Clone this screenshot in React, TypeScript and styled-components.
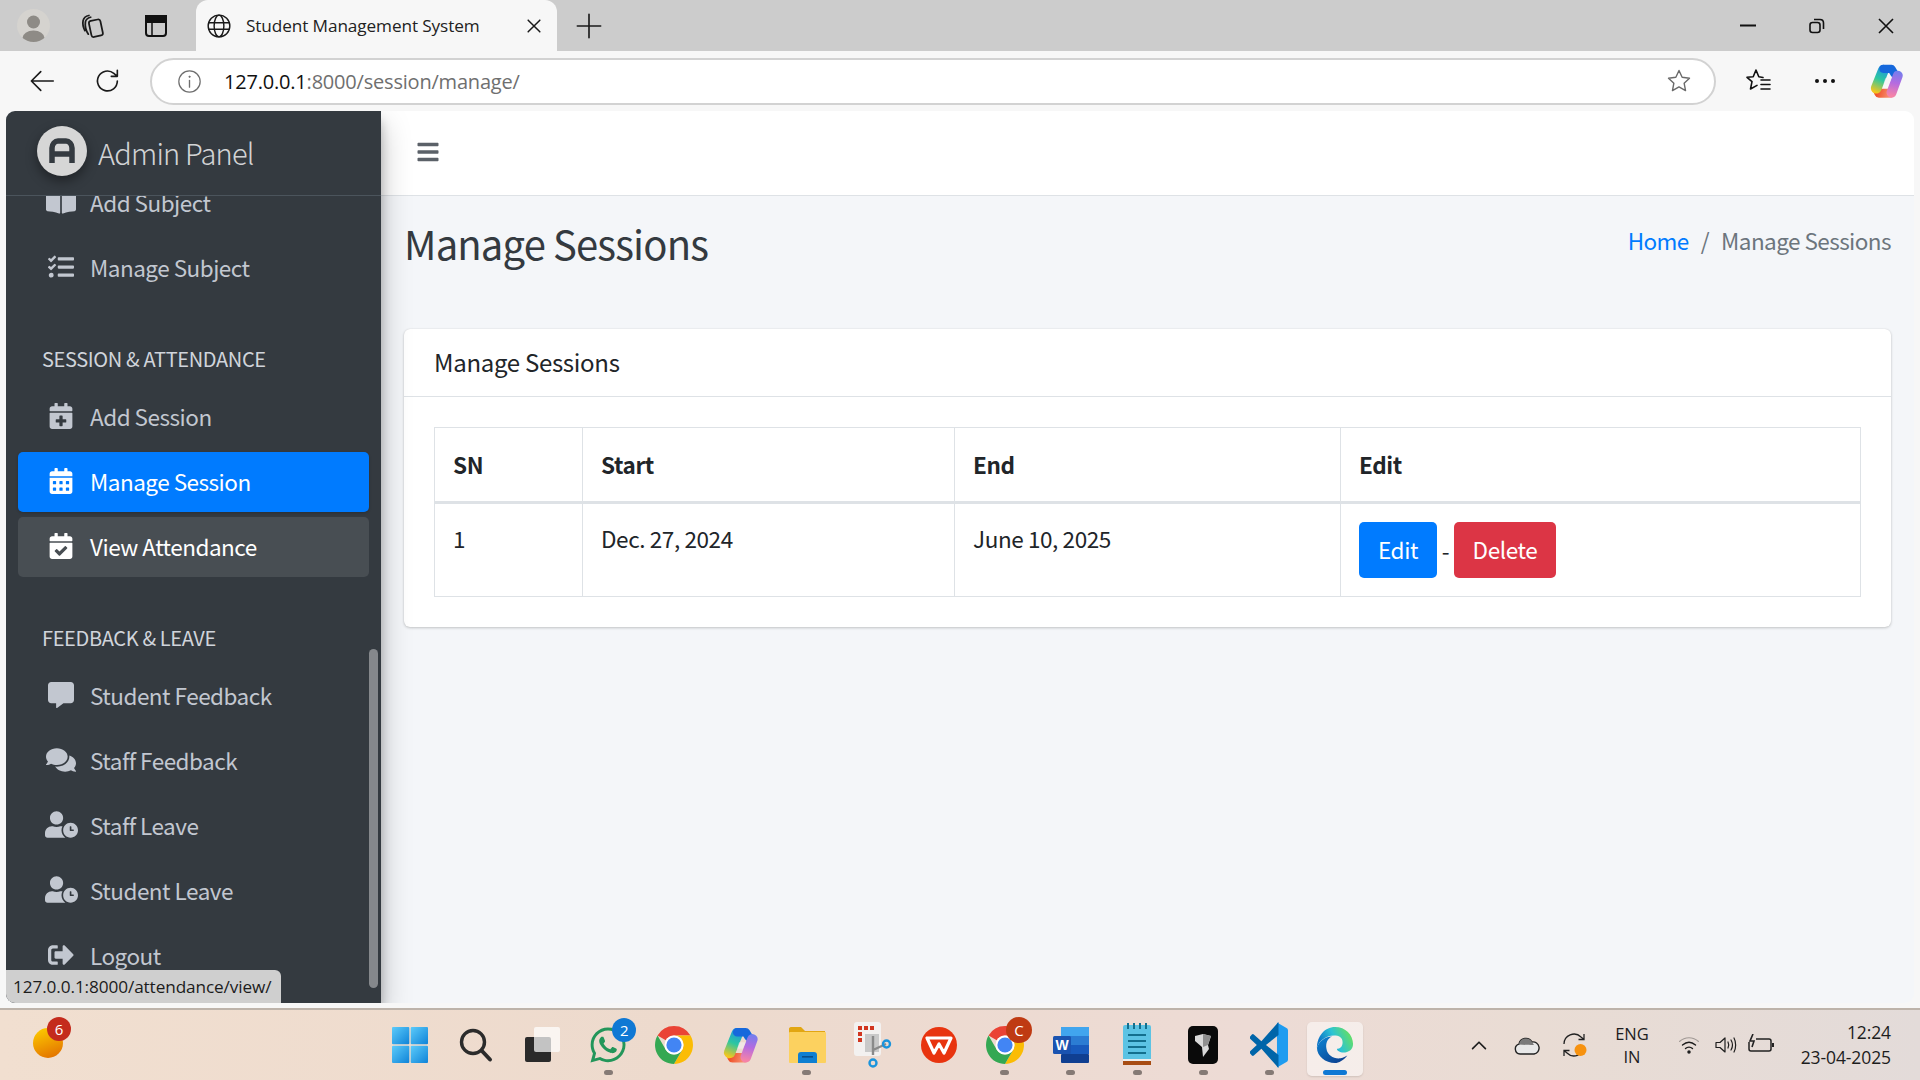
import styled, { createGlobalStyle } from 'styled-components'
import {
  FaBars,
  FaBookOpen,
  FaTasks,
  FaCalendarPlus,
  FaCalendarAlt,
  FaCalendarCheck,
  FaCommentAlt,
  FaComments,
  FaUserClock,
  FaSignOutAlt,
  FaWhatsapp,
} from 'react-icons/fa'
import { ReactNode } from 'react'

const SOURCE = `"Noto Sans CJK SC", "Noto Sans", sans-serif`
const SEGOE = `"Open Sans", "Noto Sans", sans-serif`

const GlobalStyle = createGlobalStyle`
  html, body { margin: 0; padding: 0; }
  body { font-family: ${SOURCE}; background: #f7f7f7; }
  * { box-sizing: border-box; }
`

/* ---------- browser chrome icons ---------- */

const Line = ({ size = 24, children }: { size?: number; children: ReactNode }) => (
  <svg width={size} height={size} viewBox="0 0 24 24" fill="none" stroke="currentColor" strokeWidth="1.5" strokeLinecap="round" strokeLinejoin="round">
    {children}
  </svg>
)

const CopilotLogo = ({ id, size }: { id: string; size: number }) => (
  <svg width={size} height={size} viewBox="0 0 40 40" fill="none" strokeLinecap="round" strokeLinejoin="round">
    <defs>
      <linearGradient id={`${id}a`} gradientUnits="userSpaceOnUse" x1="18" y1="4" x2="6" y2="32">
        <stop offset="0" stopColor="#1d8fe6" />
        <stop offset="0.5" stopColor="#2cc7a0" />
        <stop offset="1" stopColor="#f5c61d" />
      </linearGradient>
      <linearGradient id={`${id}b`} gradientUnits="userSpaceOnUse" x1="30" y1="8" x2="24" y2="36">
        <stop offset="0" stopColor="#6f7fee" />
        <stop offset="0.5" stopColor="#b56be0" />
        <stop offset="1" stopColor="#f583a8" />
      </linearGradient>
      <linearGradient id={`${id}c`} gradientUnits="userSpaceOnUse" x1="10" y1="30" x2="28" y2="36">
        <stop offset="0" stopColor="#f0532a" />
        <stop offset="1" stopColor="#f9a58c" />
      </linearGradient>
    </defs>
    <path d="M9 29l2 4.500h13" stroke={`url(#${id}c)`} strokeWidth="10" />
    <path d="M16 8L8 28" stroke={`url(#${id}a)`} strokeWidth="12" />
    <path d="M16 6.500h9l3 5" stroke="#1668dc" strokeWidth="9" />
    <path d="M32 14l-7 19" stroke={`url(#${id}b)`} strokeWidth="11" />
    <path d="M18 17h7l-3 7h-6z" fill="#f4f1f4" fillOpacity="0.55" />
  </svg>
)

const ChromeLogo = ({ size }: { size: number }) => (
  <svg width={size} height={size} viewBox="0 0 40 40">
    <path d="M20 0a20 20 0 0 1 17.320 10H20a10 10 0 0 0-8.660 5L2.680 10A20 20 0 0 1 20 0z" fill="#ea4335" />
    <path d="M37.320 10A20 20 0 0 1 20 40l8.660-15A10 10 0 0 0 20 10z" fill="#fbbc04" />
    <path d="M2.680 10A20 20 0 0 0 20 40l8.660-15a10 10 0 0 1-17.320 0z" fill="#34a853" />
    <circle cx="20" cy="20" r="10" fill="#fff" />
    <circle cx="20" cy="20" r="8" fill="#4285f4" />
  </svg>
)

/* ---------- taskbar logos ---------- */

const WindowsLogo = () => (
  <svg width="36" height="36" viewBox="0 0 36 36">
    <defs>
      <linearGradient id="winA" x1="0" y1="0" x2="1" y2="1">
        <stop offset="0" stopColor="#5ccbfa" />
        <stop offset="1" stopColor="#0f83d8" />
      </linearGradient>
    </defs>
    <rect x="0" y="0" width="17.300" height="17.300" rx="1" fill="url(#winA)" />
    <rect x="18.700" y="0" width="17.300" height="17.300" rx="1" fill="url(#winA)" />
    <rect x="0" y="18.700" width="17.300" height="17.300" rx="1" fill="url(#winA)" />
    <rect x="18.700" y="18.700" width="17.300" height="17.300" rx="1" fill="url(#winA)" />
  </svg>
)

const SearchLogo = () => (
  <svg width="36" height="36" viewBox="0 0 36 36" fill="none" stroke="#2b2b2b" strokeLinecap="round">
    <circle cx="15" cy="15" r="11.500" strokeWidth="3.400" />
    <path d="M24 24l8 8.500" strokeWidth="4" />
  </svg>
)

const TaskViewLogo = () => (
  <svg width="36" height="36" viewBox="0 0 36 36">
    <rect x="1" y="10" width="26" height="25" rx="2" fill="#2a2a2a" />
    <rect x="10" y="0" width="26" height="25" rx="2" fill="#fff" fillOpacity="0.72" />
  </svg>
)

const ExplorerLogo = () => (
  <svg width="38" height="36" viewBox="0 0 38 36">
    <path d="M1 2c0-1 .6-2 2-2h10l4 4h20v10H1z" fill="#e2a612" />
    <rect x="1" y="5" width="37" height="31" rx="1" fill="#fcd15f" />
    <path d="M10 28c0-2 1-3 3-3h13c2 0 3 1 3 3v8H10z" fill="#0f7fd1" />
    <rect x="14" y="29" width="11" height="1.600" fill="#0a4f8a" />
  </svg>
)

const SnipLogo = () => (
  <svg width="38" height="46" viewBox="0 0 38 46">
    <rect x="0" y="0" width="27" height="34" rx="3" fill="#f3f1f0" />
    <g fill="#d1351f">
      <rect x="4" y="4" width="4" height="4" />
      <rect x="10" y="4" width="4" height="4" />
      <rect x="16" y="4" width="4" height="4" />
      <rect x="4" y="10" width="4" height="4" />
      <rect x="4" y="16" width="4" height="4" />
    </g>
    <rect x="11" y="12" width="14" height="18" fill="#c9c9c9" />
    <path d="M19 14v19M19 28l13-6" stroke="#8a8a8a" strokeWidth="2.400" fill="none" />
    <circle cx="32.500" cy="22" r="3.500" fill="none" stroke="#1b94dc" strokeWidth="2.400" />
    <circle cx="19" cy="41" r="3.500" fill="none" stroke="#1b94dc" strokeWidth="2.400" />
  </svg>
)

const WpsLogo = () => (
  <svg width="36" height="36" viewBox="0 0 36 36">
    <circle cx="18" cy="18" r="18" fill="#e8340f" />
    <path d="M6 11h24l-7 15-5-9-5 9z" fill="none" stroke="#fff" strokeWidth="3.200" strokeLinejoin="round" />
  </svg>
)

const WordLogo = () => (
  <svg width="36" height="36" viewBox="0 0 36 36">
    <rect x="8" y="0" width="28" height="9" fill="#41a5ee" />
    <rect x="8" y="9" width="28" height="9" fill="#2b7cd3" />
    <rect x="8" y="18" width="28" height="9" fill="#185abd" />
    <rect x="8" y="27" width="28" height="9" rx="1" fill="#103f91" />
    <rect x="0" y="9" width="18" height="18" rx="1.500" fill="#1a53b0" />
    <text x="9" y="23" textAnchor="middle" fontFamily="Liberation Sans, sans-serif" fontWeight="700" fontSize="14" fill="#fff">W</text>
  </svg>
)

const NotepadLogo = () => (
  <svg width="30" height="44" viewBox="0 0 30 44">
    <rect x="1" y="2" width="28" height="36" rx="2" fill="#5cc3e4" />
    <rect x="1" y="37" width="28" height="5" fill="#a84d14" />
    <rect x="1" y="36" width="28" height="2" fill="#eee" />
    <g fill="#136f8e">
      <rect x="5" y="0" width="2" height="6" />
      <rect x="11" y="0" width="2" height="6" />
      <rect x="17" y="0" width="2" height="6" />
      <rect x="23" y="0" width="2" height="6" />
      <rect x="6" y="11" width="18" height="2" />
      <rect x="6" y="17" width="18" height="2" />
      <rect x="6" y="23" width="18" height="2" />
      <rect x="6" y="29" width="18" height="2" />
    </g>
  </svg>
)

const BlackAppLogo = () => (
  <svg width="30" height="38" viewBox="0 0 30 38">
    <rect x="0" y="0" width="30" height="38" rx="5" fill="#0a0a0a" />
    <path d="M7 10l8-2 8 2-3 9 1 4-6 8-1-10-7-6z" fill="#d9d9d9" />
    <path d="M15 8l8 2-3 9-5 2z" fill="#8f8f8f" />
  </svg>
)

const VsCodeLogo = () => (
  <svg width="38" height="46" viewBox="0 0 100 100" preserveAspectRatio="none">
    <path d="M71 99l25-12a6 6 0 0 0 4-5V18a6 6 0 0 0-4-5L71 1z" fill="#1f9cf0" />
    <path d="M75 0L30 42 10 27a4 4 0 0 0-5 0l-4 4a4 4 0 0 0 0 6l17 13L1 63a4 4 0 0 0 0 6l4 4a4 4 0 0 0 5 0l20-15 45 42V72L42 50l33-22z" fill="#0065a9" />
  </svg>
)

const EdgeLogo = () => (
  <svg width="38" height="40" viewBox="0 0 40 40">
    <defs>
      <linearGradient id="edgeTop" x1="0.1" y1="0.6" x2="0.9" y2="0.3">
        <stop offset="0" stopColor="#0c76c8" />
        <stop offset="0.5" stopColor="#2cc3d5" />
        <stop offset="1" stopColor="#5fdc6e" />
      </linearGradient>
      <linearGradient id="edgeBottom" x1="0" y1="0" x2="0.8" y2="1">
        <stop offset="0" stopColor="#0d87d6" />
        <stop offset="1" stopColor="#0c3f8f" />
      </linearGradient>
    </defs>
    <path d="M20 1c11 0 19 8 19 18 0 6-5 9-10 9-4 0-7-2-7-4 3 0 6-2 6-7 0-5-4-7-9-7C10 10 3 16 1 23 1 11 9 1 20 1z" fill="url(#edgeTop)" />
    <path d="M1 23c2-7 9-12 16-12-5 2-7 7-6 13 1 7 8 11 15 10 3-.5 5-2 7-3-4 5-9 8-13 8C10 39 1 32 1 23z" fill="url(#edgeBottom)" />
  </svg>
)

/* ---------- browser chrome ---------- */

const Page = styled.div`
  width: 1920px;
  height: 1080px;
  display: flex;
  flex-direction: column;
  overflow: hidden;
  background: #f7f7f7;
`

const TabStrip = styled.div`
  height: 51px;
  flex: none;
  display: flex;
  align-items: center;
  background: #cccccc;
  padding-left: 3px;
  color: #1a1a1a;
`

const Slot = styled.div<{ $w: number; $color?: string }>`
  width: ${(p) => p.$w}px;
  height: 100%;
  flex: none;
  display: flex;
  align-items: center;
  justify-content: center;
  color: ${(p) => p.$color || '#1a1a1a'};
`

const Avatar = styled.div`
  width: 33px;
  height: 33px;
  border-radius: 50%;
  background: #d5d3cf;
  overflow: hidden;
  display: flex;
  align-items: center;
  justify-content: center;
`

const Tab = styled.div`
  margin-left: 7px;
  width: 361px;
  height: 51px;
  align-self: flex-end;
  background: #f7f7f7;
  border-radius: 12px 12px 0 0;
  display: flex;
  align-items: center;
  padding-left: 10px;
  flex: none;
`

const TabTitle = styled.span`
  font-family: ${SEGOE};
  font-size: 17.200px;
  color: #222;
  margin-left: 14px;
  flex: 1;
  letter-spacing: -0.1px;
`

const WindowButtons = styled.div`
  margin-left: auto;
  display: flex;
  height: 100%;
`

const Toolbar = styled.div`
  height: 60px;
  flex: none;
  display: flex;
  align-items: center;
  padding: 0 0 0 9px;
  background: #f7f7f7;
  color: #1a1a1a;
`

const AddressBar = styled.div`
  width: 1566px;
  height: 47px;
  margin-left: 9px;
  flex: none;
  background: #fff;
  border: 2px solid #d2d2d2;
  border-radius: 24px;
  display: flex;
  align-items: center;
  padding: 0 20px 0 23px;
`

const Url = styled.div`
  margin-left: 21px;
  flex: 1;
  font-family: ${SEGOE};
  font-size: 20px;
  letter-spacing: -0.2px;
  color: #6f6f6f;
  b {
    font-weight: 400;
    color: #111;
  }
`

/* ---------- page ---------- */

const BrowserBody = styled.div`
  flex: 1;
  min-height: 0;
  padding: 0 6px 5px 6px;
  display: flex;
`

const Viewport = styled.div`
  position: relative;
  flex: 1;
  display: flex;
  border-radius: 9px;
  overflow: hidden;
  background: #f4f6f9;
`

const Sidebar = styled.aside`
  width: 375px;
  flex: none;
  background: #343a40;
  display: flex;
  flex-direction: column;
  box-shadow: 0 14px 28px rgba(0, 0, 0, 0.25), 0 10px 10px rgba(0, 0, 0, 0.22);
  z-index: 2;
`

const Brand = styled.div`
  height: 85px;
  flex: none;
  display: flex;
  align-items: center;
  padding: 0 0 5px 31px;
  border-bottom: 1px solid #4b545c;
`

const BrandMark = styled.div`
  width: 50px;
  height: 50px;
  border-radius: 50%;
  background: #d6d6d6;
  display: flex;
  align-items: center;
  justify-content: center;
  box-shadow: 0 5px 12px rgba(0, 0, 0, 0.4);
`

const BrandText = styled.span`
  margin-left: 11px;
  margin-top: 3px;
  font-size: 29px;
  letter-spacing: -0.8px;
  font-weight: 300;
  color: rgba(255, 255, 255, 0.8);
`

const NavClip = styled.nav`
  flex: 1;
  min-height: 0;
  overflow: hidden;
`

const NavList = styled.div`
  margin-top: -23px;
  padding: 0 12px;
`

const NavHeading = styled.div`
  padding: 41px 0 13px 24px;
  font-size: 20px;
  letter-spacing: -0.35px;
  line-height: 30px;
  color: #d0d4db;
`

const NavItem = styled.a<{ $state?: 'active' | 'hover' }>`
  height: 60px;
  margin-bottom: 5px;
  display: flex;
  align-items: center;
  padding: 0 0 3px 24px;
  border-radius: 5px;
  font-size: 22.500px;
  letter-spacing: -0.5px;
  color: ${(p) => (p.$state ? '#fff' : '#c2c7d0')};
  background: ${(p) =>
    p.$state === 'active' ? '#007bff' : p.$state === 'hover' ? 'rgba(255,255,255,0.1)' : 'transparent'};
  ${(p) => p.$state === 'active' && 'box-shadow: 0 1px 3px rgba(0,0,0,.2);'}
`

const NavIcon = styled.span`
  width: 38px;
  flex: none;
  margin-right: 10px;
  display: flex;
  justify-content: center;
`

const Scrollbar = styled.div`
  position: absolute;
  left: 363px;
  top: 538px;
  width: 9px;
  height: 339px;
  border-radius: 5px;
  background: #85888c;
  z-index: 3;
`

const StatusBubble = styled.div`
  position: absolute;
  left: 0;
  bottom: 0;
  width: 275px;
  height: 33px;
  display: flex;
  align-items: center;
  padding-left: 7px;
  background: #cfcfcf;
  border-radius: 0 6px 0 0;
  font-family: ${SEGOE};
  font-size: 17.200px;
  letter-spacing: -0.1px;
  color: #1c1c1c;
  z-index: 4;
`

const Main = styled.main`
  flex: 1;
  min-width: 0;
  display: flex;
  flex-direction: column;
`

const TopBar = styled.header`
  height: 85px;
  flex: none;
  display: flex;
  align-items: center;
  padding: 0 0 2px 35px;
  background: #fff;
  border-bottom: 1px solid #dee2e6;
  color: #5b6168;
  font-size: 24px;
`

const Content = styled.section`
  padding: 24px 23px 0 23px;
`

const PageHead = styled.div`
  height: 50px;
  margin-bottom: 59px;
  display: flex;
  align-items: center;
  justify-content: space-between;
`

const PageTitle = styled.h1`
  margin: -5px 0 0 0;
  font-size: 40px;
  letter-spacing: -0.85px;
  font-weight: 400;
  color: #343a40;
`

const Crumbs = styled.div`
  display: flex;
  align-items: center;
  font-size: 22.500px;
  letter-spacing: -0.55px;
  color: #6c757d;
  margin-top: -11px;
  a {
    color: #007bff;
  }
  i {
    font-style: normal;
    margin: 0 12px;
  }
`

const Card = styled.div`
  background: #fff;
  border-radius: 6px;
  box-shadow: 0 0 1px rgba(0, 0, 0, 0.125), 0 1px 3px rgba(0, 0, 0, 0.2);
`

const CardHeader = styled.div`
  height: 68px;
  display: flex;
  align-items: center;
  padding: 0 0 2px 30px;
  border-bottom: 1px solid #dee2e6;
  font-size: 24px;
  letter-spacing: -0.3px;
  color: #212529;
`

const CardBody = styled.div`
  padding: 30px;
`

const Table = styled.table`
  width: 100%;
  table-layout: fixed;
  border-collapse: collapse;
  font-size: 22.500px;
  letter-spacing: -0.4px;
  line-height: 37px;
  color: #212529;
`

const Th = styled.th<{ $w?: number }>`
  ${(p) => p.$w && `width: ${p.$w}px;`}
  padding: 18px;
  text-align: left;
  font-weight: 700;
  border: 1px solid #dee2e6;
  border-bottom: 3px solid #dee2e6;
`

const Td = styled.td`
  padding: 16px 18px 20px;
  vertical-align: top;
  border: 1px solid #dee2e6;
`

const Actions = styled.div`
  display: flex;
  align-items: center;
  margin: 2px 0 -2px;
`

const Dash = styled.span`
  width: 17px;
  text-align: center;
`

const Button = styled.a<{ $color: string; $w: number }>`
  width: ${(p) => p.$w}px;
  height: 56px;
  display: flex;
  align-items: center;
  justify-content: center;
  border-radius: 5px;
  background: ${(p) => p.$color};
  color: #fff;
  font-size: 22.500px;
  letter-spacing: -0.4px;
  padding-bottom: 2px;
`

/* ---------- taskbar ---------- */

const Taskbar = styled.footer`
  height: 72px;
  flex: none;
  display: flex;
  align-items: center;
  border-top: 2px solid #bdb3aa;
  background: linear-gradient(90deg, #f1dfd0 0%, #eddacd 35%, #eddbd5 65%, #e9dcd4 80%, #e3dbd9 100%);
`

const Widgets = styled.div`
  width: 377px;
  flex: none;
  padding-left: 33px;
  height: 100%;
  display: flex;
  align-items: center;
`

const Weather = styled.div`
  position: relative;
  width: 30px;
  height: 30px;
  margin-top: -4px;
  border-radius: 50%;
  background: linear-gradient(160deg, #ffd000, #e06a00);
`

const Pill = styled.span<{ $bg: string; $top: number; $size?: number }>`
  position: absolute;
  top: ${(p) => p.$top}px;
  right: -8px;
  width: ${(p) => p.$size || 24}px;
  height: ${(p) => p.$size || 24}px;
  border-radius: 50%;
  display: flex;
  align-items: center;
  justify-content: center;
  background: ${(p) => p.$bg};
  color: #fff;
  font-family: ${SEGOE};
  font-size: 15px;
`

const TaskIcons = styled.div`
  display: flex;
  height: 100%;
`

const TaskIcon = styled.div<{ $open?: boolean; $active?: boolean }>`
  position: relative;
  width: 66.100px;
  height: 100%;
  display: flex;
  align-items: center;
  justify-content: center;
  &::before {
    content: '';
    display: ${(p) => (p.$active ? 'block' : 'none')};
    position: absolute;
    left: 5px;
    right: 5px;
    top: 12px;
    bottom: 4px;
    border-radius: 5px;
    background: rgba(255, 255, 255, 0.5);
    box-shadow: 0 1px 2px rgba(0, 0, 0, 0.12);
  }
  &::after {
    content: '';
    display: ${(p) => (p.$open || p.$active ? 'block' : 'none')};
    position: absolute;
    left: 50%;
    bottom: 5px;
    width: ${(p) => (p.$active ? 24 : 9)}px;
    height: 5px;
    margin-left: ${(p) => (p.$active ? -12 : -4.5)}px;
    border-radius: 3px;
    background: ${(p) => (p.$active ? '#0f78d4' : '#857a75')};
  }
  > svg {
    position: relative;
    z-index: 1;
  }
`

const IconBadgeWrap = styled.div`
  position: relative;
  display: flex;
`

const Tray = styled.div`
  margin-left: auto;
  height: 100%;
  display: flex;
  align-items: center;
  padding-right: 29px;
  color: #1d1d1d;
  font-family: ${SEGOE};
`

const TrayIcon = styled.div<{ $w: number }>`
  width: ${(p) => p.$w}px;
  display: flex;
  justify-content: center;
`

const Lang = styled.div`
  width: 66px;
  text-align: center;
  font-size: 16.500px;
  line-height: 23px;
`

const Clock = styled.div`
  width: 106px;
  text-align: right;
  font-size: 17.500px;
  line-height: 25px;
  letter-spacing: -0.1px;
`

const AdminMark = () => (
  <svg width="26" height="26" viewBox="0 0 26 26" fill="none" stroke="#343a40" strokeWidth="5.500">
    <path d="M3 25V10c0-4 3-7 6-7h8c3 0 6 3 6 7v15M3 16h20" />
  </svg>
)

type NavEntry = { icon: ReactNode; label: string; state?: 'active' | 'hover' }

const subjectNav: NavEntry[] = [
  { icon: <FaBookOpen size={30} />, label: 'Add Subject' },
  { icon: <FaTasks size={26} />, label: 'Manage Subject' },
]

const sessionNav: NavEntry[] = [
  { icon: <FaCalendarPlus size={26} />, label: 'Add Session' },
  { icon: <FaCalendarAlt size={26} />, label: 'Manage Session', state: 'active' },
  { icon: <FaCalendarCheck size={26} />, label: 'View Attendance', state: 'hover' },
]

const feedbackNav: NavEntry[] = [
  { icon: <FaCommentAlt size={26} />, label: 'Student Feedback' },
  { icon: <FaComments size={30} />, label: 'Staff Feedback' },
  { icon: <FaUserClock size={33} />, label: 'Staff Leave' },
  { icon: <FaUserClock size={33} />, label: 'Student Leave' },
  { icon: <FaSignOutAlt size={26} />, label: 'Logout' },
]

const renderNav = (items: NavEntry[]) =>
  items.map((item) => (
    <NavItem key={item.label} $state={item.state}>
      <NavIcon>{item.icon}</NavIcon>
      {item.label}
    </NavItem>
  ))

const App = () => {
  return (
    <Page>
      <GlobalStyle />
      <TabStrip>
        <Slot $w={60}>
          <Avatar>
            <svg width="33" height="33" viewBox="0 0 33 33">
              <circle cx="16.500" cy="13" r="6.500" fill="#8e8b86" />
              <ellipse cx="16.500" cy="29" rx="11" ry="7.500" fill="#8e8b86" />
            </svg>
          </Avatar>
        </Slot>
        <Slot $w={60}>
          <Line size={28}>
            <rect x="9.500" y="7" width="10" height="14" rx="2" transform="rotate(-12 14 14)" />
            <path d="M8 19C6 16 5 12 5.500 8.500 6 6 8 5 10 4.500M5 16C3.500 13 3 10 3.500 7.500 4 5 6 3.500 8.500 3" />
          </Line>
        </Slot>
        <Slot $w={66}>
          <svg width="24" height="24" viewBox="0 0 24 24" fill="none" stroke="#111" strokeWidth="2">
            <rect x="2" y="2" width="20" height="20" rx="3" />
            <rect x="2" y="2" width="20" height="6" fill="#111" />
            <path d="M8 8v14" strokeWidth="1.500" />
          </svg>
        </Slot>
        <Tab>
          <Line size={26}>
            <circle cx="12" cy="12" r="10" strokeWidth="1.300" />
            <ellipse cx="12" cy="12" rx="4.500" ry="10" strokeWidth="1.300" />
            <path d="M2.500 9h19M2.500 15h19" strokeWidth="1.300" />
          </Line>
          <TabTitle>Student Management System</TabTitle>
          <Slot $w={46}>
            <Line size={20}>
              <path d="M5 5l14 14M19 5L5 19" strokeWidth="1.800" />
            </Line>
          </Slot>
        </Tab>
        <Slot $w={64}>
          <Line size={28}>
            <path d="M12 2v20M2 12h20" strokeWidth="1.400" />
          </Line>
        </Slot>
        <WindowButtons>
          <Slot $w={69}>
            <svg width="16" height="3" viewBox="0 0 16 3">
              <rect width="16" height="2" y="0.500" fill="#111" />
            </svg>
          </Slot>
          <Slot $w={69}>
            <svg width="16" height="16" viewBox="0 0 16 16" fill="none" stroke="#111" strokeWidth="1.600">
              <rect x="1" y="4.500" width="10" height="10" rx="2.500" />
              <path d="M5 1.500h6c2 0 3.500 1.500 3.500 3.500v6" />
            </svg>
          </Slot>
          <Slot $w={69}>
            <svg width="16" height="16" viewBox="0 0 16 16" fill="none" stroke="#111" strokeWidth="1.600">
              <path d="M1 1l14 14M15 1L1 15" />
            </svg>
          </Slot>
        </WindowButtons>
      </TabStrip>

      <Toolbar>
        <Slot $w={66}>
          <Line size={30}>
            <path d="M21 12H3.500M11 4.500L3.500 12l7.500 7.500" strokeWidth="1.300" />
          </Line>
        </Slot>
        <Slot $w={66}>
          <Line size={28}>
            <path d="M20 12a8.500 8.500 0 1 1-3-6.500L20 8M20 2.800V8h-5.200" strokeWidth="1.400" />
          </Line>
        </Slot>
        <AddressBar>
          <Slot $w={28} $color="#6f6f6f">
            <Line size={27}>
              <circle cx="12" cy="12" r="9.500" strokeWidth="1.100" />
              <path d="M12 11v6" strokeWidth="1.200" />
              <circle cx="12" cy="7.800" r="0.600" fill="currentColor" strokeWidth="0.600" />
            </Line>
          </Slot>
          <Url>
            <b>127.0.0.1</b>:8000/session/manage/
          </Url>
          <Slot $w={30} $color="#6a6a6a">
            <Line size={28}>
              <path d="M12 3l2.700 5.800 6.300.8-4.600 4.300 1.200 6.300L12 17l-5.600 3.200 1.200-6.300L3 9.600l6.300-.8z" strokeWidth="1.200" />
            </Line>
          </Slot>
        </AddressBar>
        <Slot $w={85}>
          <svg width="28" height="28" viewBox="0 0 28 28" fill="none" stroke="#111" strokeWidth="1.600" strokeLinejoin="round" strokeLinecap="round">
            <path d="M18 10.500l-4.200-.8L11 3 8.200 9.700 2 10.300l5 4.400-1.500 7.300 6.500-3.600M16 13h9M16 17.500h9M16 22h9" />
          </svg>
        </Slot>
        <Slot $w={47}>
          <svg width="22" height="6" viewBox="0 0 22 6" fill="#111">
            <circle cx="3" cy="3" r="2" />
            <circle cx="11" cy="3" r="2" />
            <circle cx="19" cy="3" r="2" />
          </svg>
        </Slot>
        <Slot $w={78}>
          <CopilotLogo id="copTop" size={36} />
        </Slot>
      </Toolbar>

      <BrowserBody>
        <Viewport>
          <Sidebar>
            <Brand>
              <BrandMark>
                <AdminMark />
              </BrandMark>
              <BrandText>Admin Panel</BrandText>
            </Brand>
            <NavClip>
              <NavList>
                {renderNav(subjectNav)}
                <NavHeading>SESSION &amp; ATTENDANCE</NavHeading>
                {renderNav(sessionNav)}
                <NavHeading>FEEDBACK &amp; LEAVE</NavHeading>
                {renderNav(feedbackNav)}
              </NavList>
            </NavClip>
          </Sidebar>
          <Scrollbar />
          <StatusBubble>127.0.0.1:8000/attendance/view/</StatusBubble>

          <Main>
            <TopBar>
              <FaBars />
            </TopBar>
            <Content>
              <PageHead>
                <PageTitle>Manage Sessions</PageTitle>
                <Crumbs>
                  <a>Home</a>
                  <i>/</i>
                  <span>Manage Sessions</span>
                </Crumbs>
              </PageHead>
              <Card>
                <CardHeader>Manage Sessions</CardHeader>
                <CardBody>
                  <Table>
                    <thead>
                      <tr>
                        <Th $w={148}>SN</Th>
                        <Th $w={372}>Start</Th>
                        <Th $w={386}>End</Th>
                        <Th>Edit</Th>
                      </tr>
                    </thead>
                    <tbody>
                      <tr>
                        <Td>1</Td>
                        <Td>Dec. 27, 2024</Td>
                        <Td>June 10, 2025</Td>
                        <Td>
                          <Actions>
                            <Button $color="#007bff" $w={78}>Edit</Button>
                            <Dash>-</Dash>
                            <Button $color="#dc3545" $w={102}>Delete</Button>
                          </Actions>
                        </Td>
                      </tr>
                    </tbody>
                  </Table>
                </CardBody>
              </Card>
            </Content>
          </Main>
        </Viewport>
      </BrowserBody>

      <Taskbar>
        <Widgets>
          <Weather>
            <Pill $bg="#c42b1c" $top={-11}>6</Pill>
          </Weather>
        </Widgets>
        <TaskIcons>
          <TaskIcon><WindowsLogo /></TaskIcon>
          <TaskIcon><SearchLogo /></TaskIcon>
          <TaskIcon><TaskViewLogo /></TaskIcon>
          <TaskIcon $open>
            <IconBadgeWrap>
              <FaWhatsapp size={40} color="#23965a" />
              <Pill $bg="#0f78d4" $top={-7}>2</Pill>
            </IconBadgeWrap>
          </TaskIcon>
          <TaskIcon><ChromeLogo size={38} /></TaskIcon>
          <TaskIcon><CopilotLogo id="copBar" size={38} /></TaskIcon>
          <TaskIcon $open><ExplorerLogo /></TaskIcon>
          <TaskIcon><SnipLogo /></TaskIcon>
          <TaskIcon><WpsLogo /></TaskIcon>
          <TaskIcon $open>
            <IconBadgeWrap>
              <ChromeLogo size={38} />
              <Pill $bg="#bf3a12" $top={-9} $size={26}>C</Pill>
            </IconBadgeWrap>
          </TaskIcon>
          <TaskIcon $open><WordLogo /></TaskIcon>
          <TaskIcon $open><NotepadLogo /></TaskIcon>
          <TaskIcon $open><BlackAppLogo /></TaskIcon>
          <TaskIcon $open><VsCodeLogo /></TaskIcon>
          <TaskIcon $active><EdgeLogo /></TaskIcon>
        </TaskIcons>
        <Tray>
          <TrayIcon $w={48}>
            <Line size={22}>
              <path d="M5 16l7-7 7 7" strokeWidth="1.800" />
            </Line>
          </TrayIcon>
          <TrayIcon $w={48}>
            <svg width="26" height="20" viewBox="0 0 26 20">
              <path d="M6 19a5 5 0 0 1-1-9.800A7 7 0 0 1 18 7a5.800 5.800 0 0 1 2 12z" fill="#e8e8e8" stroke="#222" strokeWidth="1.400" />
              <path d="M5 9.500A7 7 0 0 1 18 7l2 3c-6 0-10 0-15-.5z" fill="#7a7a7a" />
            </svg>
          </TrayIcon>
          <TrayIcon $w={48}>
            <svg width="28" height="28" viewBox="0 0 28 28" fill="none" stroke="#222" strokeWidth="1.300">
              <path d="M3 13a10 10 0 0 1 17-7l3 2.500M23 3v5.500h-5.500M23 16a10 10 0 0 1-17 6l-3-2.500M3 25v-5.500h5.500" />
              <circle cx="19.500" cy="19" r="6" fill="#f7920f" stroke="none" />
            </svg>
          </TrayIcon>
          <Lang>ENG<br />IN</Lang>
          <TrayIcon $w={48}>
            <Line size={24}>
              <path d="M2.500 8.500C8 3.500 16 3.500 21.500 8.500" strokeWidth="1.100" opacity="0.35" />
              <path d="M5.500 12c4-3.500 9-3.500 13 0M8.500 15.500c2-1.800 5-1.800 7 0" strokeWidth="1.400" />
              <circle cx="12" cy="19" r="1" fill="currentColor" />
            </Line>
          </TrayIcon>
          <TrayIcon $w={24}>
            <Line size={26}>
              <path d="M3 9.500h4l5-4.500v14l-5-4.500H3zM15 9c1 2 1 4 0 6M18 7c1.800 3 1.800 7 0 10M21 5c2.200 4 2.200 10 0 14" strokeWidth="1.200" />
            </Line>
          </TrayIcon>
          <TrayIcon $w={48}>
            <svg width="26" height="22" viewBox="0 0 26 22" fill="none" stroke="#222" strokeWidth="1.500">
              <path d="M8 5h13a2 2 0 0 1 2 2v8a2 2 0 0 1-2 2H3a2 2 0 0 1-2-2v-7" />
              <path d="M25 9v4" strokeWidth="2" />
              <path d="M5 0L2 7h4l-2 6" strokeWidth="1.600" />
            </svg>
          </TrayIcon>
          <Clock>12:24<br />23-04-2025</Clock>
        </Tray>
      </Taskbar>
    </Page>
  )
}

export default App
